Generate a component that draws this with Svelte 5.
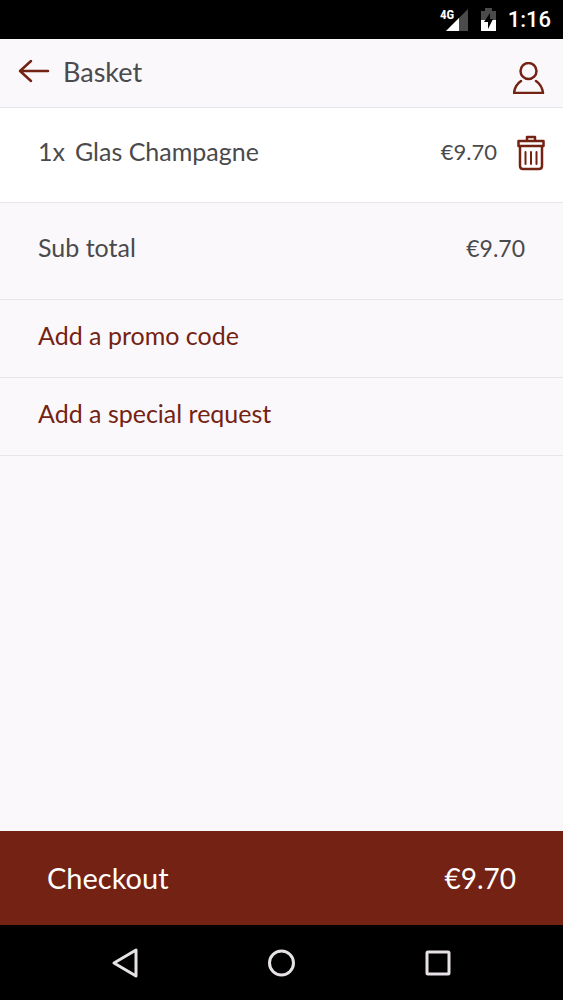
<script lang="ts">
  type Item = {
    id: number;
    name: string;
    quantity: number;
    price: number;
  };

  let items: Item[] = $state([
    { id: 1, name: "Glas Champagne", quantity: 1, price: 9.7 },
  ]);

  let total = $derived(
    items.reduce((sum, item) => sum + item.quantity * item.price, 0)
  );

  const euro = (amount: number) => `€${amount.toFixed(2)}`;

  function remove(id: number) {
    items = items.filter((item) => item.id !== id);
  }
</script>

<div class="screen">
  <div class="status">
    <svg class="signal" width="29" height="24" viewBox="0 0 29 24">
      <path d="M29 1V23H7Z" fill="#4b4b4b" />
      <path d="M20 10V23H7Z" fill="#fff" />
      <path d="M0 0H16V12H0Z" fill="#000" />
      <text x="1" y="11">4G</text>
    </svg>
    <svg width="16" height="24" viewBox="0 0 16 24">
      <path d="M1 3H5V0H12V3H16V12H1Z" fill="#4b4b4b" />
      <path d="M1 12H16V23H1Z" fill="#fff" />
      <path d="M10 5L4 14H8V21L13 11H10Z" fill="#000" />
    </svg>
    <time>1:16</time>
  </div>

  <header>
    <button class="icon" aria-label="Back">
      <svg width="32" height="24" viewBox="0 0 32 24">
        <path d="M30 12H2M13 2L2 12L13 22" />
      </svg>
    </button>
    <h1>Basket</h1>
    <button class="icon account" aria-label="Account">
      <svg width="32" height="32" viewBox="0 0 32 32">
        <circle cx="15.5" cy="9" r="8" />
        <path d="M8 19Q2 23 1 31H30Q29 23 23 19" />
      </svg>
    </button>
  </header>

  <main>
    {#each items as item (item.id)}
      <div class="row item">
        <span class="quantity">{item.quantity}x</span>
        <span>{item.name}</span>
        <span class="price">{euro(item.price)}</span>
        <button
          class="icon"
          aria-label="Remove {item.name}"
          onclick={() => remove(item.id)}
        >
          <svg width="28" height="36" viewBox="0 0 28 36">
            <path d="M10 6V2H18V6M1.5 6H26.5V11H1.5ZM3 11V31Q3 34 6 34H22Q25 34 25 31V11" />
            <path d="M8.5 17V29M14 17V29M19.5 17V29" stroke-width="2" />
          </svg>
        </button>
      </div>
    {/each}

    <div class="row subtotal">
      <span>Sub total</span>
      <span class="price">{euro(total)}</span>
    </div>
    <button class="row link">Add a promo code</button>
    <button class="row link">Add a special request</button>
  </main>

  <button class="checkout">
    <span>Checkout</span>
    <span class="total">{euro(total)}</span>
  </button>

  <nav>
    <button class="icon" aria-label="System back">
      <svg width="30" height="32" viewBox="0 0 30 32">
        <path d="M4 16L26 3V29Z" />
      </svg>
    </button>
    <button class="icon" aria-label="Home">
      <svg width="30" height="32" viewBox="0 0 30 32">
        <circle cx="15.5" cy="16" r="12" />
      </svg>
    </button>
    <button class="icon" aria-label="Recent apps">
      <svg width="30" height="32" viewBox="0 0 30 32">
        <rect x="4" y="5" width="22" height="22" rx="1" />
      </svg>
    </button>
  </nav>
</div>

<style>
  :global(body) {
    margin: 0;
  }

  .screen {
    --brand: #742213;
    --text: #4a4a4c;
    --line: #e6e5e8;
    display: flex;
    flex-direction: column;
    min-height: 100vh;
    background: #faf8fb;
    color: var(--text);
    font-family: Lato, "Liberation Sans", sans-serif;
    font-size: 25px;
    line-height: 32px;
  }

  button {
    padding: 0;
    border: 0;
    background: none;
    color: inherit;
    font: inherit;
    cursor: pointer;
  }

  svg {
    display: block;
    fill: none;
    stroke: currentColor;
    stroke-width: 2.5;
    stroke-linejoin: round;
    stroke-linecap: round;
  }

  .icon {
    flex: none;
    color: var(--brand);
  }

  .status {
    display: flex;
    align-items: center;
    justify-content: flex-end;
    gap: 12px;
    height: 39px;
    padding-right: 12px;
    background: #000;
    color: #fff;
    font-family: Roboto, sans-serif;
    font-size: 22px;
    font-weight: 500;
  }

  .status svg {
    stroke: none;
  }

  .signal text {
    fill: #fff;
    font-family: "Roboto Condensed", Roboto, sans-serif;
    font-size: 13px;
    font-weight: 700;
  }

  header {
    display: flex;
    align-items: center;
    gap: 13px;
    box-sizing: border-box;
    height: 69px;
    padding: 0 18px 4px;
    border-bottom: 1px solid var(--line);
  }

  h1 {
    margin: 0;
    padding-top: 2px;
    font-size: 27px;
    font-weight: 400;
  }

  .account {
    margin-left: auto;
    padding-top: 14px;
  }

  main {
    flex: 1;
  }

  .row {
    display: flex;
    align-items: center;
    box-sizing: border-box;
    width: 100%;
    padding: 0 38px 8px;
    border-bottom: 1px solid var(--line);
    text-align: left;
  }

  .price {
    margin-left: auto;
    padding-top: 2px;
    font-size: 23px;
  }

  .item {
    height: 95px;
    padding-right: 18px;
    background: #fff;
  }

  .item .price {
    font-size: 22px;
  }

  .quantity {
    margin-right: 10px;
  }

  .item .icon {
    margin-left: 20px;
    padding-top: 4px;
  }

  .subtotal {
    height: 97px;
  }

  .link {
    height: 78px;
    color: var(--brand);
  }

  .checkout {
    display: flex;
    align-items: center;
    justify-content: space-between;
    height: 94px;
    padding: 0 47px;
    background: var(--brand);
    color: #fff;
    font-size: 29px;
  }

  .total {
    font-size: 28px;
  }

  nav {
    display: flex;
    align-items: center;
    justify-content: space-around;
    height: 75px;
    padding: 0 47px;
    background: #000;
  }

  nav .icon {
    color: #e6e2e6;
  }

  nav svg {
    stroke-width: 3;
  }
</style>
